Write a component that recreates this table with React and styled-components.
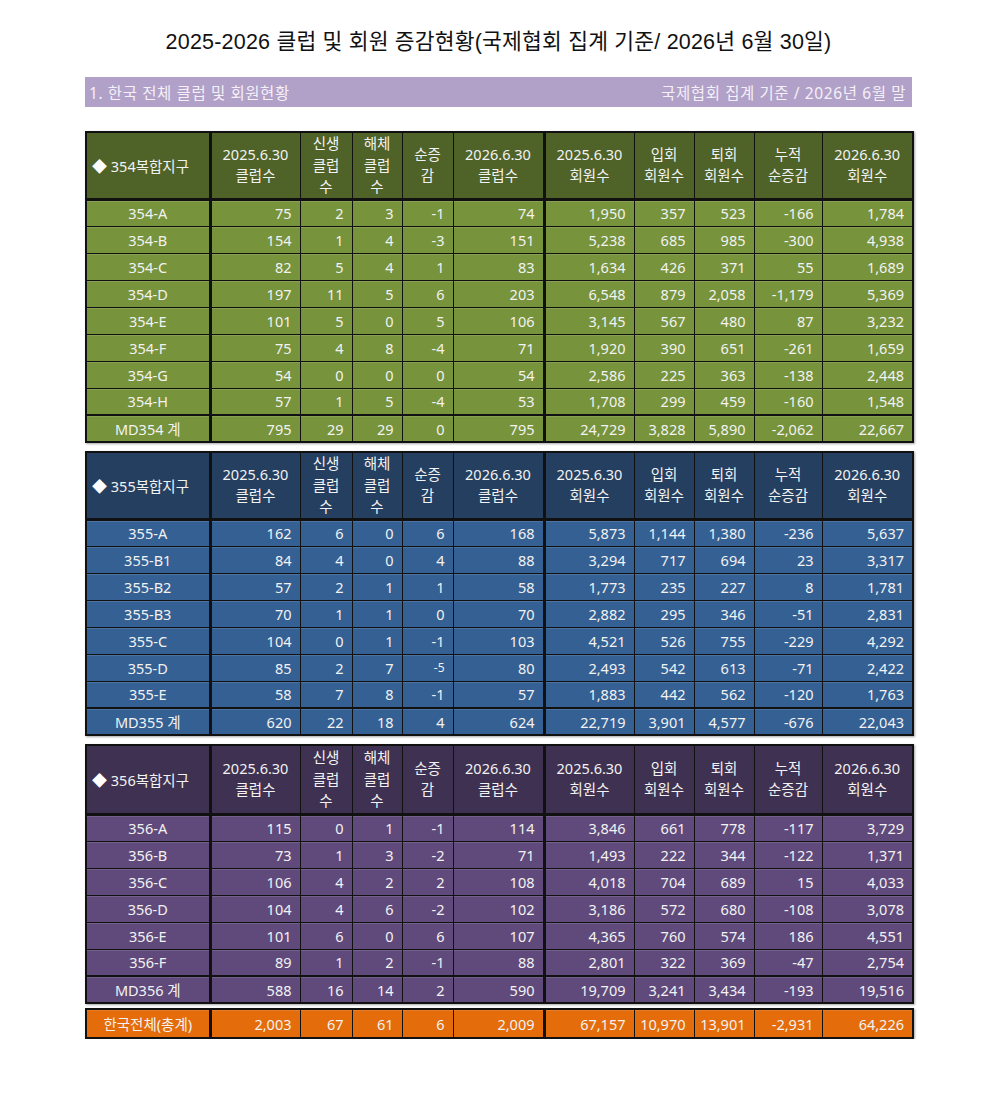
import React from 'react';
import styled, { createGlobalStyle } from 'styled-components';

const GlobalStyle = createGlobalStyle`
  body {
    margin: 0;
    background: #fff;
    font-family: 'Noto Sans', 'Noto Sans CJK KR', sans-serif;
  }
`;

const HEAD = [
  ['2025.6.30', '클럽수'],
  ['신생', '클럽', '수'],
  ['해체', '클럽', '수'],
  ['순증', '감'],
  ['2026.6.30', '클럽수'],
  ['2025.6.30', '회원수'],
  ['입회', '회원수'],
  ['퇴회', '회원수'],
  ['누적', '순증감'],
  ['2026.6.30', '회원수'],
];

const WIDTHS = [124, 90, 52, 50, 51, 91, 90, 60, 60, 68, 91];

const districts = [
  {
    name: '354복합지구',
    head: '#4f6228',
    body: '#77933c',
    headH: 66,
    rows: [
      ['354-A', '75', '2', '3', '-1', '74', '1,950', '357', '523', '-166', '1,784'],
      ['354-B', '154', '1', '4', '-3', '151', '5,238', '685', '985', '-300', '4,938'],
      ['354-C', '82', '5', '4', '1', '83', '1,634', '426', '371', '55', '1,689'],
      ['354-D', '197', '11', '5', '6', '203', '6,548', '879', '2,058', '-1,179', '5,369'],
      ['354-E', '101', '5', '0', '5', '106', '3,145', '567', '480', '87', '3,232'],
      ['354-F', '75', '4', '8', '-4', '71', '1,920', '390', '651', '-261', '1,659'],
      ['354-G', '54', '0', '0', '0', '54', '2,586', '225', '363', '-138', '2,448'],
      ['354-H', '57', '1', '5', '-4', '53', '1,708', '299', '459', '-160', '1,548'],
    ],
    total: ['MD354 계', '795', '29', '29', '0', '795', '24,729', '3,828', '5,890', '-2,062', '22,667'],
  },
  {
    name: '355복합지구',
    head: '#243f60',
    body: '#356093',
    headH: 67,
    rows: [
      ['355-A', '162', '6', '0', '6', '168', '5,873', '1,144', '1,380', '-236', '5,637'],
      ['355-B1', '84', '4', '0', '4', '88', '3,294', '717', '694', '23', '3,317'],
      ['355-B2', '57', '2', '1', '1', '58', '1,773', '235', '227', '8', '1,781'],
      ['355-B3', '70', '1', '1', '0', '70', '2,882', '295', '346', '-51', '2,831'],
      ['355-C', '104', '0', '1', '-1', '103', '4,521', '526', '755', '-229', '4,292'],
      ['355-D', '85', '2', '7', '-5', '80', '2,493', '542', '613', '-71', '2,422'],
      ['355-E', '58', '7', '8', '-1', '57', '1,883', '442', '562', '-120', '1,763'],
    ],
    total: ['MD355 계', '620', '22', '18', '4', '624', '22,719', '3,901', '4,577', '-676', '22,043'],
  },
  {
    name: '356복합지구',
    head: '#3f3151',
    body: '#604a7b',
    headH: 69,
    rows: [
      ['356-A', '115', '0', '1', '-1', '114', '3,846', '661', '778', '-117', '3,729'],
      ['356-B', '73', '1', '3', '-2', '71', '1,493', '222', '344', '-122', '1,371'],
      ['356-C', '106', '4', '2', '2', '108', '4,018', '704', '689', '15', '4,033'],
      ['356-D', '104', '4', '6', '-2', '102', '3,186', '572', '680', '-108', '3,078'],
      ['356-E', '101', '6', '0', '6', '107', '4,365', '760', '574', '186', '4,551'],
      ['356-F', '89', '1', '2', '-1', '88', '2,801', '322', '369', '-47', '2,754'],
    ],
    total: ['MD356 계', '588', '16', '14', '2', '590', '19,709', '3,241', '3,434', '-193', '19,516'],
  },
];

const grandTotal = ['한국전체(총계)', '2,003', '67', '61', '6', '2,009', '67,157', '10,970', '13,901', '-2,931', '64,226'];

const isSplit = (i) => i === 0 || i === 5;

function Cols() {
  return (
    <colgroup>
      {WIDTHS.map((w, i) => (
        <col key={i} style={{ width: w }} />
      ))}
    </colgroup>
  );
}

function BodyRow({ cells, $sum, $grand }) {
  return (
    <Row $sum={$sum} $grand={$grand}>
      {cells.map((c, i) =>
        i === 0 ? (
          <Td key={i} $center $split>
            {c}
          </Td>
        ) : (
          <Td key={i} $split={isSplit(i)} $small={c === '-5'}>
            {c}
          </Td>
        )
      )}
    </Row>
  );
}

export default function App() {
  return (
    <>
      <GlobalStyle />
      <Page>
        <Title>2025-2026 클럽 및 회원 증감현황(국제협회 집계 기준/ 2026년 6월 30일)</Title>
        <SectionBar>
          <span>1. 한국 전체 클럽 및 회원현황</span>
          <span>국제협회 집계 기준 / 2026년 6월 말</span>
        </SectionBar>

        <Tables>
          {districts.map((d) => (
            <Table key={d.name} $head={d.head} $body={d.body}>
              <Cols />
              <thead>
                <HeadRow $h={d.headH}>
                  <Th $left $split>
                    <Diamond>◆</Diamond> {d.name}
                  </Th>
                  {HEAD.map((lines, i) => (
                    <Th key={i} $split={isSplit(i + 1)}>
                      {lines.map((l, j) => (
                        <HeadLine key={j}>{l}</HeadLine>
                      ))}
                    </Th>
                  ))}
                </HeadRow>
              </thead>
              <tbody>
                {d.rows.map((r) => (
                  <BodyRow key={r[0]} cells={r} />
                ))}
                <BodyRow cells={d.total} $sum />
              </tbody>
            </Table>
          ))}

          <GrandTable $head="#e46c0a" $body="#e46c0a">
            <Cols />
            <tbody>
              <BodyRow cells={grandTotal} $grand />
            </tbody>
          </GrandTable>
        </Tables>
      </Page>
    </>
  );
}

const Page = styled.div`
  width: 827px;
  margin: 0 0 0 85px;
  padding-top: 27px;
`;

const Title = styled.h1`
  margin: 0 -60px;
  text-align: center;
  font-family: 'Liberation Sans', 'Noto Sans CJK KR', sans-serif;
  font-size: 21.5px;
  font-weight: 400;
  line-height: 30px;
  letter-spacing: 0.2px;
  color: #111;
`;

const SectionBar = styled.div`
  margin-top: 20px;
  height: 30px;
  padding: 0 6px 0 4px;
  display: flex;
  align-items: center;
  justify-content: space-between;
  background: #b1a0c7;
  color: #f4f0f8;
  font-size: 15.5px;
  letter-spacing: 0.6px;
`;

const Tables = styled.div`
  margin-top: 24px;
  display: flex;
  flex-direction: column;
  gap: 8px;
`;

const Table = styled.table`
  width: 827px;
  table-layout: fixed;
  border-collapse: collapse;
  border: 2px solid #111;
  box-shadow: 1px 1px 2px rgba(0, 0, 0, 0.35);
  color: #f2f2f2;
  font-size: 14px;

  thead {
    background: ${(p) => p.$head};
  }
  tbody {
    background: ${(p) => p.$body};
  }
`;

const GrandTable = styled(Table)`
  margin-top: -4px;
`;

const HeadRow = styled.tr`
  height: ${(p) => p.$h}px;
  border-bottom: 3px solid #111;
`;

const Th = styled.th`
  padding: 0 2px;
  font-weight: 400;
  font-size: 14.5px;
  text-align: ${(p) => (p.$left ? 'left' : 'center')};
  padding-left: ${(p) => (p.$left ? '5px' : '2px')};
  border: 1px solid #111;
  border-right-width: ${(p) => (p.$split ? '3px' : '1px')};
  white-space: nowrap;
`;

const HeadLine = styled.div`
  height: 21.5px;
  line-height: 21.5px;
`;

const Diamond = styled.span`
  font-size: 15px;
  color: #fff;
`;

const Row = styled.tr`
  height: ${(p) => (p.$grand ? 29 : 27)}px;
  border-top: ${(p) => (p.$sum ? '2px' : '1px')} solid #111;
`;

const Td = styled.td`
  padding: 0 ${(p) => (p.$center ? '2px' : '8px')} 0 2px;
  text-align: ${(p) => (p.$center ? 'center' : 'right')};
  font-size: ${(p) => (p.$small ? '12px' : '14.5px')};
  line-height: 18px;
  border: 1px solid #111;
  border-right-width: ${(p) => (p.$split ? '3px' : '1px')};
  box-shadow: inset 0 1px 0 rgba(255, 255, 255, 0.12);
  white-space: nowrap;
`;
